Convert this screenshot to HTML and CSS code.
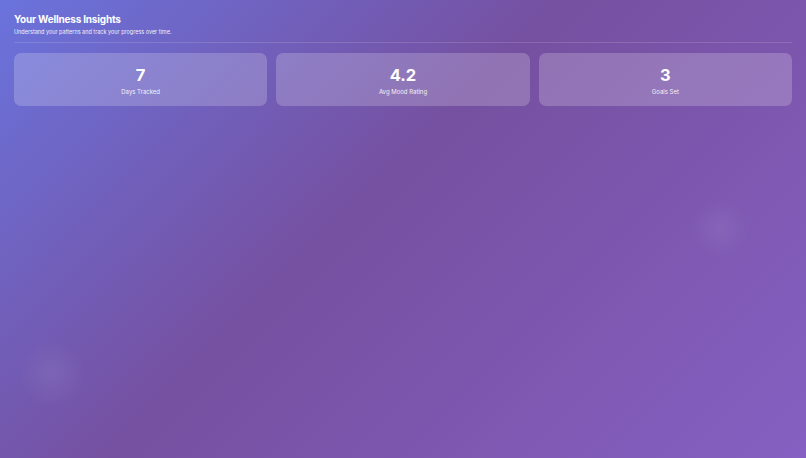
FILE: index.html
```html
<!DOCTYPE html>
<html lang="en">
<head>
<meta charset="utf-8">
<title>Your Wellness Insights</title>
<link rel="stylesheet" href="styles.css">
</head>
<body>
<div class="blob blob-right"></div>
<div class="blob blob-left"></div>
<main class="page">
  <header class="header">
    <h1 class="title">Your Wellness Insights</h1>
    <p class="subtitle">Understand your patterns and track your progress over time.</p>
  </header>
  <section class="stats">
    <div class="card">
      <div class="value">7</div>
      <div class="label">Days Tracked</div>
    </div>
    <div class="card">
      <div class="value">4.2</div>
      <div class="label">Avg Mood Rating</div>
    </div>
    <div class="card">
      <div class="value">3</div>
      <div class="label">Goals Set</div>
    </div>
  </section>
</main>
</body>
</html>
```
FILE: styles.css
```css
* { box-sizing: border-box; }
html, body { height: 100%; }
body {
  margin: 0;
  font-family: Inter, "Liberation Sans", sans-serif;
  color: #fff;
  background: linear-gradient(135deg, #6a73dc 0%, #7650a0 45%, #8660c2 100%);
  overflow: hidden;
  position: relative;
}
.blob {
  position: absolute;
  border-radius: 50%;
  background: radial-gradient(circle, rgba(255,255,255,0.07) 0%, rgba(255,255,255,0) 70%);
}
.blob-right { left: 690px; top: 198px; width: 60px; height: 60px; }
.blob-left { left: 18px; top: 340px; width: 68px; height: 68px; }
.page {
  padding: 13px 14px;
  position: relative;
}
.header {
  padding-bottom: 6px;
  border-bottom: 1px solid rgba(255,255,255,0.14);
  margin-bottom: 10px;
}
.title {
  margin: 0;
  font-size: 10px;
  font-weight: 700;
  line-height: 13px;
  letter-spacing: -0.2px;
}
.subtitle {
  margin: 2px 0 0;
  font-size: 5.5px;
  line-height: 8px;
  opacity: 0.9;
}
.stats {
  display: grid;
  grid-template-columns: repeat(3, 1fr);
  gap: 9px;
}
.card {
  height: 53px;
  border-radius: 7px;
  background: rgba(255,255,255,0.2);
  display: flex;
  flex-direction: column;
  align-items: center;
  justify-content: center;
  padding-top: 2px;
}
.value {
  font-size: 16.5px;
  font-weight: 700;
  line-height: 18px;
}
.label {
  margin-top: 4px;
  font-size: 6px;
  line-height: 8px;
  opacity: 0.9;
}
```
